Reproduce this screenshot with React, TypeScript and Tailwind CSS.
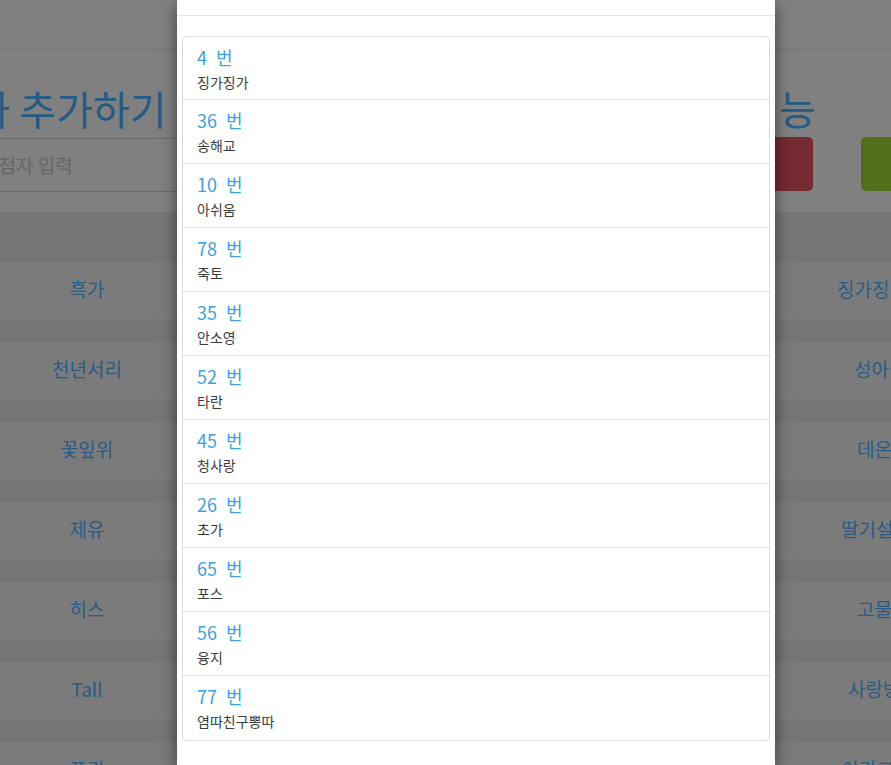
import React from "react";

const items = [
  { n: 4, name: "징가징가" },
  { n: 36, name: "송해교" },
  { n: 10, name: "아쉬움" },
  { n: 78, name: "죽토" },
  { n: 35, name: "안소영" },
  { n: 52, name: "타란" },
  { n: 45, name: "청사랑" },
  { n: 26, name: "초가" },
  { n: 65, name: "포스" },
  { n: 56, name: "융지" },
  { n: 77, name: "염따친구뽕따" },
];

const rows = [
  { l: "흑가", r: "징가징가", pl: "pl-[62px]" },
  { l: "천년서리", r: "성아린", pl: "pl-[79px]" },
  { l: "꽃잎위", r: "데온이", pl: "pl-[82px]" },
  { l: "제유", r: "딸기설빙", pl: "pl-[66px]" },
  { l: "히스", r: "고물상", pl: "pl-[82px]" },
  { l: "Tall", r: "사랑방", pl: "pl-[73px]" },
  { l: "포리", r: "아라고", pl: "pl-[67px]" },
];

export default function App() {
  return (
    <div className="relative w-[891px] h-[765px] overflow-hidden bg-[#808080] font-['Noto_Sans_CJK_KR','Noto_Sans',sans-serif]">
      {/* background page (under overlay) */}
      <div className="h-[49px] border-b border-[#777777]" />
      <div className="flex">
        <div className="w-[445px] shrink-0">
          <div className="mt-[39px] ml-[-100px] whitespace-nowrap text-[40px] leading-[40px] text-[#245a84]">
            당첨자 추가하기
          </div>
          <div className="mt-[10px] ml-[-32px] h-[54px] border-y border-[#6a6a6a] pl-[13px] flex items-center text-[19px] text-[#666666] whitespace-nowrap">
            당첨자 입력
          </div>
        </div>
        <div className="flex-1">
          <div className="mt-[39px] ml-[215px] whitespace-nowrap text-[40px] leading-[40px] text-[#245a84]">
            추첨 기능
          </div>
          <div className="mt-[9px] flex">
            <div className="ml-[325px] w-[43px] h-[54px] rounded-[5px] bg-[#762a31]" />
            <div className="ml-[48px] w-[60px] h-[54px] rounded-[5px] bg-[#526f1c]" />
          </div>
        </div>
      </div>
      <div className="mt-[20px]">
        <div className="h-[50px] bg-[#767676]" />
        {rows.map((row, i) => (
          <div key={i}>
            <div className="h-[57px] pb-[2px] bg-[#7b7b7b] flex items-center text-[19px] text-[#285c87] whitespace-nowrap">
              <div className="w-[174px] text-center">{row.l}</div>
              <div className="flex-1" />
              <div className={`w-[116px] overflow-hidden ${row.pl}`}>{row.r}</div>
            </div>
            <div className="h-[23px] bg-[#767676]" />
          </div>
        ))}
      </div>

      {/* modal */}
      <div className="absolute top-0 bottom-0 left-[177px] w-[598px] bg-white shadow-[0_5px_15px_rgba(0,0,0,0.5)]">
        <div className="h-[16px] border-b border-[#e5e5e5]" />
        <div className="pt-[20px] px-[5px]">
          <div className="border border-[#dddddd] rounded-[4px] divide-y divide-[#dddddd]">
            {items.map((it) => (
              <div key={it.n} className="h-[64px] first:h-[63px] pt-[10px] pl-[14px]">
                <div className="text-[18px] leading-[20px] text-[#42a0de] whitespace-nowrap">
                  <span>{it.n}</span>
                  <span className="ml-[9px]">번</span>
                </div>
                <div className="mt-[5px] text-[14px] leading-[20px] text-[#3c3c3c]">
                  {it.name}
                </div>
              </div>
            ))}
          </div>
        </div>
      </div>
    </div>
  );
}
